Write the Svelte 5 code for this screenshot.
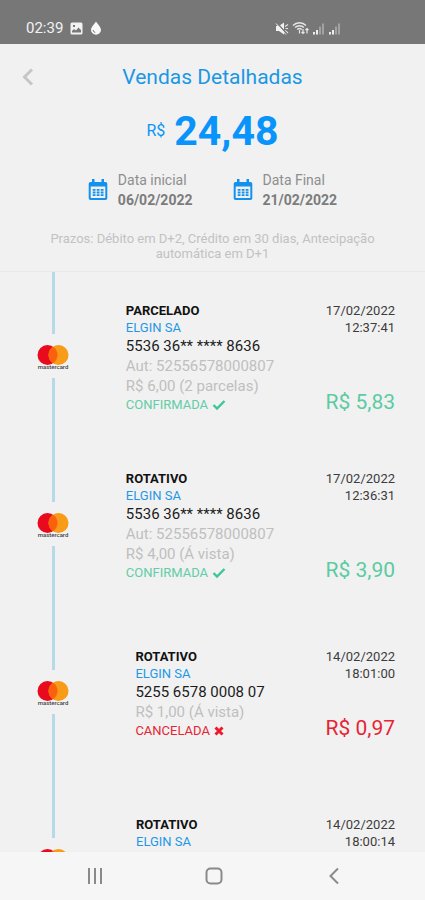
<script lang="ts">
	interface Sale {
		type: string;
		merchant: string;
		card?: string;
		auth?: string;
		detail?: string;
		status?: 'CONFIRMADA' | 'CANCELADA';
		date: string;
		time: string;
		amount?: string;
	}

	const period = [
		{ label: 'Data inicial', value: '06/02/2022' },
		{ label: 'Data Final', value: '21/02/2022' },
	];

	const sales: Sale[] = [
		{
			type: 'PARCELADO',
			merchant: 'ELGIN SA',
			card: '5536 36** **** 8636',
			auth: '52556578000807',
			detail: 'R$ 6,00 (2 parcelas)',
			status: 'CONFIRMADA',
			date: '17/02/2022',
			time: '12:37:41',
			amount: 'R$ 5,83',
		},
		{
			type: 'ROTATIVO',
			merchant: 'ELGIN SA',
			card: '5536 36** **** 8636',
			auth: '52556578000807',
			detail: 'R$ 4,00 (Á vista)',
			status: 'CONFIRMADA',
			date: '17/02/2022',
			time: '12:36:31',
			amount: 'R$ 3,90',
		},
		{
			type: 'ROTATIVO',
			merchant: 'ELGIN SA',
			card: '5255 6578 0008 07',
			detail: 'R$ 1,00 (Á vista)',
			status: 'CANCELADA',
			date: '14/02/2022',
			time: '18:01:00',
			amount: 'R$ 0,97',
		},
		{
			type: 'ROTATIVO',
			merchant: 'ELGIN SA',
			date: '14/02/2022',
			time: '18:00:14',
		},
	];
</script>

<div class="screen">
	<div class="status">
		<span class="clock">02:39</span>
		<svg width="13" height="13" viewBox="0 0 13 13">
			<path fill="#f2f2f2" fill-rule="evenodd" d="M2 0.5h9A1.5 1.5 0 0 1 12.500 2v9a1.500 1.500 0 0 1-1.500 1.500H2A1.500 1.500 0 0 1 .5 11V2A1.500 1.500 0 0 1 2 .5ZM2 10.500h9V8L8.500 5.500 6 8.500 4 7 2 9ZM3 3v2h2V3Z" />
		</svg>
		<svg width="12" height="14" viewBox="0 0 12 14">
			<path fill="#f8f8f8" d="M6 0.500C7.500 3 11 6 11 9a5 4.700 0 0 1-10 0C1 6 4.500 3 6 .5Z" />
			<path d="M3 9q.3 2 2.300 2.500" fill="none" stroke="#777" stroke-width="1" />
		</svg>
		<div class="signals">
			<svg width="14" height="13" viewBox="0 0 14 13" fill="none">
				<path fill="#f2f2f2" d="M1 4h3l5-3.500v12L4 9H1Z" />
				<path stroke="#e2e2e2" stroke-width="1.200" d="M10 4.500l3-2M10.500 6.500H13M10 8.500l3 2.500" />
				<path stroke="#777" stroke-width="1.500" d="M1 0l11 12" />
				<path stroke="#f2f2f2" stroke-width="1" d="M1 1.500l10 11" />
			</svg>
			<svg width="17" height="14" viewBox="0 0 17 14" fill="none" stroke="#e6e6e6" stroke-width="1.400">
				<path d="M1 4.500a9 9 0 0 1 13 0M3 6.500a6.500 6.500 0 0 1 9 0M5.200 8.500a3.500 3.500 0 0 1 4.600 0" />
				<path d="M7.500 9v3.500M11 8v4.500M9.500 11l1.500 1.500L12.500 11M15 12.500V7.500M13.500 9L15 7.500 16.500 9" stroke-width="1.200" />
			</svg>
			{#each [0, 1] as sim (sim)}
				<svg width="13" height="13" viewBox="0 0 13 13">
					<path fill="#ededed" d="M1 10h2v2.500H1ZM4 8h2v4.500H4Z" />
					<path fill="#a2a2a2" d="M7 4.500h2v8H7ZM10 1.500h2v11h-2Z" />
				</svg>
			{/each}
		</div>
	</div>

	<header>
		<div class="titlebar">
			<button class="back" aria-label="Voltar">
				<svg width="14" height="20" viewBox="0 0 14 20" fill="none" stroke="#c6c6c6" stroke-width="3">
					<path d="M11 2.500L3.500 10l7.500 7.500" />
				</svg>
			</button>
			<h1>Vendas Detalhadas</h1>
		</div>
		<div class="total">
			<span>R$</span>
			<strong>24,48</strong>
		</div>
		<div class="period">
			{#each period as p (p.label)}
				<button class="date">
					<svg width="20" height="24" viewBox="0 0 20 24">
						<path fill="#1291ef" fill-rule="evenodd" d="M4 1h2.500v3h7V1H16v3h1.500A1.800 1.800 0 0 1 19.300 5.800v14.400a1.800 1.800 0 0 1-1.800 1.800h-15A1.800 1.800 0 0 1 .7 20.200V5.800A1.800 1.800 0 0 1 2.500 4H4ZM2.700 8.500v11.500h14.600V8.500Z" />
						<path stroke="#1291ef" stroke-width="1.800" stroke-dasharray="2.800 1.200" d="M4.700 11.800h10.800M4.700 14.500h10.800M4.700 17.200h10.800" />
					</svg>
					<span class="date-text">
						<span>{p.label}</span>
						<b>{p.value}</b>
					</span>
				</button>
			{/each}
		</div>
		<p class="terms">Prazos: Débito em D+2, Crédito em 30 dias, Antecipação automática em D+1</p>
	</header>

	<ul class="sales">
		{#each sales as sale (sale.time)}
			<li>
				<div class="rail">
					<i></i>
					<svg width="36" height="44" viewBox="0 0 36 44" role="img" aria-label="mastercard">
						<circle cx="12.500" cy="21" r="10" fill="#ea0a1e" />
						<circle cx="23.500" cy="21" r="10" fill="#f79b18" />
						<path fill="#fb600c" d="M18 12.650a10 10 0 0 1 0 16.700a10 10 0 0 1 0-16.700Z" />
						<text x="18" y="35" text-anchor="middle">mastercard</text>
					</svg>
					<i></i>
				</div>
				<div class="entry" class:short={!sale.auth}>
					<div class="info">
						<b class="type">{sale.type}</b>
						<span class="merchant">{sale.merchant}</span>
						{#if sale.card}
							<span class="card">{sale.card}</span>
						{/if}
						{#if sale.auth}
							<span class="muted">Aut: {sale.auth}</span>
						{/if}
						{#if sale.detail}
							<span class="muted">{sale.detail}</span>
						{/if}
						{#if sale.status === 'CONFIRMADA'}
							<span class="state">
								{sale.status}
								<svg width="14" height="12" viewBox="0 0 14 12" fill="none" stroke="#3fc696" stroke-width="2.400">
									<path d="M1.500 6l3.500 3.500L12.500 2" />
								</svg>
							</span>
						{:else if sale.status === 'CANCELADA'}
							<span class="state canceled">
								{sale.status}
								<svg width="10" height="12" viewBox="0 0 10 12" fill="none" stroke="#ea1c2c" stroke-width="3">
									<path d="M1.500 2.500l7 7M8.500 2.500l-7 7" />
								</svg>
							</span>
						{/if}
					</div>
					<div class="side">
						<span class="when">{sale.date}<br />{sale.time}</span>
						{#if sale.amount}
							<span class="amount" class:canceled={sale.status === 'CANCELADA'}>{sale.amount}</span>
						{/if}
					</div>
				</div>
			</li>
		{/each}
	</ul>

	<nav>
		<button aria-label="Recentes">
			<svg width="20" height="20" viewBox="0 0 20 20" stroke="#8a8a8a" stroke-width="2">
				<path d="M4 2v16M10 2v16M16 2v16" />
			</svg>
		</button>
		<button aria-label="Início">
			<svg width="20" height="20" viewBox="0 0 20 20" fill="none" stroke="#8a8a8a" stroke-width="2">
				<rect x="2.500" y="2.500" width="15" height="15" rx="4" />
			</svg>
		</button>
		<button aria-label="Voltar">
			<svg width="20" height="20" viewBox="0 0 20 20" fill="none" stroke="#8a8a8a" stroke-width="2">
				<path d="M14 2.500L6.500 10l7.500 7.500" />
			</svg>
		</button>
	</nav>
</div>

<style>
	:global(body) {
		margin: 0;
		background: #f1f1f1;
	}

	.screen {
		height: 100vh;
		display: flex;
		flex-direction: column;
		overflow: hidden;
		background: #f1f1f1;
		font-family: Roboto, 'Liberation Sans', sans-serif;
	}

	svg {
		display: block;
		flex: none;
	}

	button {
		padding: 0;
		border: 0;
		background: none;
		font: inherit;
		color: inherit;
		text-align: left;
		cursor: pointer;
	}

	.status {
		flex: none;
		box-sizing: border-box;
		height: 44px;
		padding: 12px 84px 0 26px;
		display: flex;
		align-items: center;
		gap: 7px;
		background: #777;
		color: #f2f2f2;
	}

	.clock {
		font-size: 15px;
		line-height: 20px;
	}

	.signals {
		margin-left: auto;
		display: flex;
		align-items: center;
		gap: 3px;
	}

	header {
		flex: none;
		padding: 20px 0 10px;
		border-bottom: 1px solid #e9e9e9;
	}

	.titlebar {
		display: grid;
		grid-template-columns: 60px 1fr 60px;
		align-items: center;
	}

	.back {
		padding-left: 21px;
	}

	h1 {
		margin: 0;
		font-size: 21px;
		line-height: 26px;
		font-weight: 400;
		text-align: center;
		color: #1c97e4;
	}

	.total {
		margin-top: 17px;
		display: flex;
		justify-content: center;
		align-items: center;
		gap: 9px;
		color: #0894fa;
	}

	.total span {
		font-size: 16px;
		line-height: 20px;
	}

	.total strong {
		font-size: 41px;
		line-height: 48px;
		font-weight: 700;
	}

	.period {
		margin-top: 15px;
		display: flex;
		justify-content: center;
		gap: 40px;
	}

	.date {
		display: flex;
		align-items: center;
		gap: 10px;
	}

	.date-text {
		display: flex;
		flex-direction: column;
		font-size: 14px;
		line-height: 20px;
		color: #8e8e8e;
	}

	.date-text b {
		font-weight: 700;
		color: #7c7c7c;
	}

	.terms {
		max-width: 340px;
		margin: 21px auto 0;
		font-size: 13px;
		line-height: 15px;
		text-align: center;
		color: #c2c2c2;
	}

	.sales {
		flex: 1;
		min-height: 0;
		margin: 0;
		padding: 0;
		overflow: hidden;
		list-style: none;
	}

	li {
		height: 168px;
		display: flex;
	}

	.rail {
		flex: none;
		width: 106px;
		display: flex;
		flex-direction: column;
		align-items: center;
	}

	.rail i {
		flex: 1;
		width: 3px;
		background: #b5dbe9;
	}

	.rail text {
		font-size: 6px;
		font-weight: 500;
		fill: #444;
	}

	.entry {
		flex: 1;
		padding: 30px 30px 0 0;
		display: grid;
		grid-template-columns: 1fr 101px;
		align-content: start;
	}

	.entry.short {
		padding-top: 40px;
	}

	.info {
		justify-self: center;
		min-width: 128px;
		display: flex;
		flex-direction: column;
		font-size: 15px;
		line-height: 20px;
		white-space: nowrap;
	}

	.type,
	.merchant {
		font-size: 13px;
		line-height: 17px;
	}

	.type {
		color: #111;
	}

	.merchant {
		color: #1e98e6;
	}

	.card {
		color: #1c1c1c;
	}

	.muted {
		color: #bfbfbf;
	}

	.state {
		display: flex;
		align-items: center;
		gap: 4px;
		font-size: 13px;
		line-height: 18px;
		color: #62cda6;
	}

	.side {
		display: flex;
		flex-direction: column;
		justify-content: space-between;
		align-items: flex-end;
	}

	.when {
		font-size: 13px;
		line-height: 17px;
		text-align: right;
		color: #3c3c3c;
	}

	.amount {
		font-size: 21px;
		line-height: 24px;
		color: #5bcba2;
	}

	.canceled {
		color: #e62534;
	}

	nav {
		flex: none;
		height: 48px;
		padding: 0 31px 0 35px;
		display: grid;
		grid-template-columns: repeat(3, 1fr);
		background: #f6f6f6;
	}

	nav button {
		display: flex;
		align-items: center;
		justify-content: center;
	}
</style>
